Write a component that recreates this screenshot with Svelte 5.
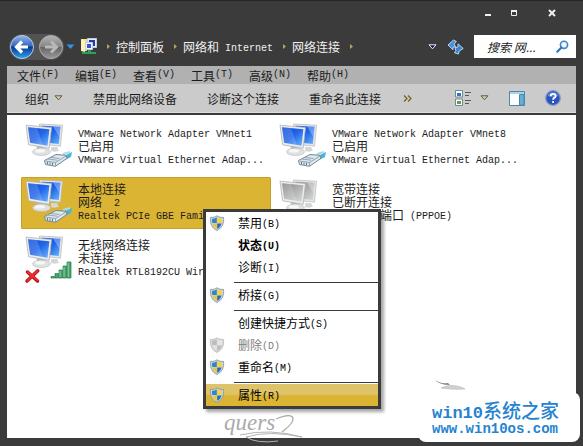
<script>
  const crumbs = ['控制面板', '网络和 Internet', '网络连接'];
  const menus = ['文件(F)', '编辑(E)', '查看(V)', '工具(T)', '高级(N)', '帮助(H)'];
  const tools = ['禁用此网络设备', '诊断这个连接', '重命名此连接'];
  const connections = [
    { lines: ['VMware Network Adapter VMnet1', '已启用', 'VMware Virtual Ethernet Adap...'], kind: 'lan' },
    { lines: ['VMware Network Adapter VMnet8', '已启用', 'VMware Virtual Ethernet Adap...'], kind: 'lan' },
    { lines: ['本地连接', '网络  2', 'Realtek PCIe GBE Family Contr...'], kind: 'lan', selected: true },
    { lines: ['宽带连接', '已断开连接', 'WAN 微型端口 (PPPOE)'], kind: 'off' },
    { lines: ['无线网络连接', '未连接', 'Realtek RTL8192CU Wireless...'], kind: 'wifi' }
  ];
  const actions = [
    { label: '禁用(B)', shield: true },
    { label: '状态(U)', bold: true },
    { label: '诊断(I)' },
    null,
    { label: '桥接(G)', shield: true },
    null,
    { label: '创建快捷方式(S)' },
    { label: '删除(D)', shield: true, disabled: true },
    { label: '重命名(M)', shield: true },
    null,
    { label: '属性(R)', shield: true, active: true }
  ];
  const split = (s) => s.match(/[\x00-\x7f]+|[^\x00-\x7f]+/g) ?? [];
</script>

{#snippet mixed(s)}{#each split(s) as part}{#if part.charCodeAt(0) < 128}<span class="latin">{part}</span>{:else}{part}{/if}{/each}{/snippet}

{#snippet shieldIcon(off)}
  <svg class="shield" width="16" height="16" viewBox="0 0 16 16" aria-hidden="true">
    <path d="M8 .8C6 2.2 4 2.6 1.4 2.4 1 8.6 2.6 12.8 8 15.4c5.400-2.600 7-6.800 6.600-13C12 2.600 10 2.200 8 .8z" fill={off ? '#d8d8d8' : '#c9d3da'} stroke={off ? '#b8b8b8' : '#7f919d'} stroke-width=".8" />
    <path d="M7.800 2.600C6.300 3.500 4.700 3.900 3 3.900c-.1 1.500 0 2.900.4 4.100h4.400z" fill={off ? '#bdbdbd' : '#2f83cf'} />
    <path d="M8.200 2.600c1.500.9 3.100 1.300 4.800 1.300.1 1.500 0 2.900-.4 4.100H8.200z" fill={off ? '#e6e6e6' : '#f8d43a'} />
    <path d="M3.500 8.400h4.300v5.400c-2.200-1.200-3.600-3-4.300-5.400z" fill={off ? '#e2e2e2' : '#f5c528'} />
    <path d="M12.500 8.400H8.200v5.400c2.200-1.200 3.600-3 4.300-5.400z" fill={off ? '#bdbdbd' : '#2570bd'} />
  </svg>
{/snippet}

{#snippet computerIcon(kind)}
  {@const screen = kind === 'off' ? 'url(#screenOff)' : 'url(#screenOn)'}
  <svg class="computer" width="48" height="48" viewBox="0 0 48 48" aria-hidden="true">
    <path d="M14.500 3l23 1.200-2 21-20-2z" fill="#e4e5e6" stroke="#b4b8bb" stroke-width=".7" />
    <path d="M16.500 4.800l19 1-1.700 17.300-16-1.800z" fill={screen} />
    <path d="M28 5.500l7.500.3-1.200 10z" fill="#fff" opacity=".3" />
    <path d="M26 26h6l2 3.500q-3 2-8 .5z" fill="#d4d7d9" />
    <path d="M11.500 24.500h7l.8 5h-7z" fill="#b5babd" />
    <ellipse cx="16.500" cy="30.800" rx="9" ry="3.700" fill="#dfe1e2" stroke="#b7bbbd" stroke-width=".6" />
    <ellipse cx="15" cy="29.800" rx="5" ry="1.800" fill="#f7f7f7" />
    <path d="M1 4.200l25.500 2.300-2.300 20.800L3.600 23.800z" fill="#ebecec" stroke="#aeb4b8" stroke-width=".8" />
    <path d="M3 6.300l21.400 2-1.900 16.400-17.300-2.900z" fill={screen} />
    <path d="M3 6.300l9 .8 6 17-12.800-2.300z" fill="#fff" opacity=".17" />
    {#if kind === 'lan'}
      <path d="M39 35l8-4-1 5-6 3z" fill="#48b4d8" />
      <path d="M38 33l7-2" stroke="#a7dcec" stroke-width="2" />
      <path d="M19.500 39.500L31 33.500l10 .8 1 3-11.500 8-10-1.800z" fill="#dce7ee" stroke="#728796" stroke-width="1" />
      <path d="M20.500 40l10 1.500L41 35M30.500 41.500v3.400M23 38l9 1.200M26 36.500l8.500 1" fill="none" stroke="#8196a4" stroke-width=".8" />
      <path d="M22.500 41v2.200M25 41.500v2.200M27.500 41.800V44" stroke="#586e7d" stroke-width=".9" />
    {:else if kind === 'wifi'}
      <path d="M26 43.500h3.500V45H26zM30 40.500h3.500V45H30zM34 37h3.500v8H34zM38 33h3.500v12H38zM42 29h4v16h-4z" fill="#48a36c" stroke="#297d4a" stroke-width=".7" />
      <path d="M39 34v10M43.200 30v14M35 38v6" stroke="#9bd9b1" stroke-width=".9" />
      <path d="M2.500 39l10 9M12.800 37.800L2 48" stroke="#a80d14" stroke-width="3.400" stroke-linecap="round" />
      <path d="M2.800 39l9.500 8.300M12.500 38L2.500 47.500" stroke="#f02c32" stroke-width="2" stroke-linecap="round" />
    {/if}
  </svg>
{/snippet}

{#snippet caret(fill, stroke)}
  <svg width="9" height="6" viewBox="0 0 9 6" aria-hidden="true"><path d="M1 .8h7L4.500 4.800z" {fill} {stroke} /></svg>
{/snippet}

<svg class="defs" width="0" height="0" aria-hidden="true">
  <defs>
    <linearGradient id="screenOn" x1="0" y1="0" x2="1" y2="1">
      <stop offset="0" stop-color="#0c4bd6" /><stop offset=".5" stop-color="#2065ea" /><stop offset="1" stop-color="#6fb8fa" />
    </linearGradient>
    <linearGradient id="screenOff" x1="0" y1="0" x2="1" y2="1">
      <stop offset="0" stop-color="#858585" /><stop offset="1" stop-color="#dadada" />
    </linearGradient>
    <linearGradient id="blueBall" x1="0" y1="0" x2="0" y2="1">
      <stop offset="0" stop-color="#8fb6ea" /><stop offset=".45" stop-color="#3568c2" /><stop offset=".5" stop-color="#0c3591" /><stop offset="1" stop-color="#2aa5f5" />
    </linearGradient>
    <linearGradient id="greyBall" x1="0" y1="0" x2="0" y2="1">
      <stop offset="0" stop-color="#b5b5b5" /><stop offset=".48" stop-color="#868686" /><stop offset=".52" stop-color="#666" /><stop offset="1" stop-color="#999" />
    </linearGradient>
  </defs>
</svg>

<div class="window">
  <header class="titlebar">
    <button aria-label="最小化"><svg width="8" height="8"><path d="M1 6h6" stroke="#eee" stroke-width="2" /></svg></button>
    <button aria-label="最大化"><svg width="8" height="8"><path d="M1.500 2v4.500h5V2" fill="none" stroke="#eee" /><path d="M1 2h6" stroke="#eee" stroke-width="2" /></svg></button>
    <button class="close" aria-label="关闭"><svg width="8" height="8"><path d="M1 1l6 6M7 1L1 7" stroke="#eee" stroke-width="2" /></svg></button>
  </header>

  <nav class="address">
    <div class="history">
      <button aria-label="后退">
        <svg width="26" height="26" viewBox="0 0 26 26"><circle cx="13" cy="13" r="11.500" fill="url(#blueBall)" stroke="#b8cbe4" /><path d="M19 13H8M13 7.500L7.500 13l5.500 5.500" fill="none" stroke="#fff" stroke-width="3.200" /></svg>
      </button>
      <button aria-label="前进">
        <svg width="26" height="26" viewBox="0 0 26 26"><circle cx="13" cy="13" r="11.500" fill="url(#greyBall)" stroke="#aaa" /><path d="M7 13h11M13 7.500l5.500 5.500-5.500 5.500" fill="none" stroke="#b9b9b9" stroke-width="3" /></svg>
      </button>
    </div>
    <button class="recent" aria-label="最近页面">{@render caret('#3d9be8', '#2876b8')}</button>
    <svg width="16" height="17" viewBox="0 0 16 17" aria-hidden="true">
      <path d="M0 1h6v12H0z" fill="#f5e08a" /><path d="M0 1l4 2v11l-4-1z" fill="#fff3b8" />
      <path d="M6.500.5h9v9h-9z" fill="#e8ecf4" stroke="#c2cbe0" /><path d="M8 2h6v6H8z" fill="#2239b0" />
      <path d="M4.500 4.500h7v7h-7z" fill="#f4f6fa" stroke="#c2cbe0" /><path d="M6 6h4v4H6z" fill="#3a54cf" />
      <path d="M7 12h3v2h5v2H1v-2h6z" fill="#25a35c" />
    </svg>
    {#each crumbs as crumb}
      <svg class="sep" width="3" height="5" aria-hidden="true"><path d="M0 0l3 2.500L0 5z" fill="#b4a65c" /></svg>
      <a href="#top">{@render mixed(crumb)}</a>
    {/each}
    <svg class="sep" width="3" height="5" aria-hidden="true"><path d="M0 0l3 2.500L0 5z" fill="#b4a65c" /></svg>
    <span class="spring"></span>
    <button class="drop" aria-label="以前的位置">{@render caret('#101065', '#eee')}</button>
    <button class="refresh" aria-label="刷新">
      <svg width="17" height="16" viewBox="0 0 17 16"><path d="M6.500 1L1 6l5 4.800V8h2.500L7.200 4.800 9.500 2.600z" fill="#4a90d8" stroke="#b5d5f0" /><path d="M11 4.800l5.200 4.700-4 2.500-.7 3-4-1.200 1.300-2.300L8 8.500l3-.5z" fill="#3d82cc" stroke="#b5d5f0" /></svg>
    </button>
    <label class="search">
      <input type="text" aria-label="搜索 网络连接" placeholder="搜索 网..." />
      <svg width="13" height="13" viewBox="0 0 13 13" aria-hidden="true"><circle cx="8" cy="4.800" r="3.600" fill="#eef7ff" stroke="#3c86c8" stroke-width="1.600" /><path d="M5.400 7.500L1.300 11.700" stroke="#3477b8" stroke-width="2.200" stroke-linecap="round" /></svg>
    </label>
  </nav>

  <div class="menubar">
    {#each menus as m}<button>{@render mixed(m)}</button>{/each}
  </div>

  <div class="toolbar">
    <button class="organize"><span>组织</span>{@render caret('#d8cfa0', '#5f5b43')}</button>
    {#each tools as t}<button>{t}</button>{/each}
    <button class="more" aria-label="更多">
      <svg width="9" height="7" viewBox="0 0 9 7"><path d="M1 .5l3 3-3 3M5 .5l3 3-3 3" fill="none" stroke="#7a6420" stroke-width="1.300" /></svg>
    </button>
    <div class="right">
      <button class="view" aria-label="更改视图">
        <svg width="16" height="16" viewBox="0 0 16 16"><path d="M.5.500h7v6.500h-7zM.5 9h7v6.500h-7z" fill="#fff" stroke="#6f8796" /><path d="M2 3h4v3H2z" fill="#3770bc" /><path d="M2 11h4v3H2z" fill="#6b9a51" /><path d="M10 2.500h6M10 5.500h4M10 10.500h6M10 13.500h4" stroke="#595959" /></svg>
        {@render caret('#d8cfa0', '#5f5b43')}
      </button>
      <button aria-label="预览窗格">
        <svg width="16" height="15" viewBox="0 0 16 15"><path d="M.5.500h15v14H.5z" fill="#fff" stroke="#4b88ad" /><path d="M1 1h14v2H1z" fill="#a9d3e8" /><path d="M10.500 3.500h4.500V14h-4.500z" fill="#63b2d6" stroke="#4b88ad" /></svg>
      </button>
      <button aria-label="帮助">
        <svg width="16" height="16" viewBox="0 0 16 16"><circle cx="8" cy="8" r="7.300" fill="#2953bd" stroke="#8297c5" stroke-width="1.300" /><path d="M2.500 6a5.700 5 0 0 1 11 0q-5 2-11 0z" fill="#7fa2ea" opacity=".6" /><path d="M5.600 6.200q0-2.400 2.500-2.400t2.500 2.100q0 1.300-1.400 2Q8.100 8.500 8.100 9.700M8.100 11v1.900" fill="none" stroke="#fff" stroke-width="1.800" /></svg>
      </button>
    </div>
  </div>

  <main>
    <div class="grid">
      {#each connections as c}
        <button class="conn" class:selected={c.selected}>
          {@render computerIcon(c.kind)}
          <span class="lines">{#each c.lines as l}<span>{@render mixed(l)}</span>{/each}</span>
        </button>
      {/each}
    </div>
  </main>

  <div class="context" role="menu">
    {#each actions as a}
      {#if a}
        <button role="menuitem" class:bold={a.bold} class:active={a.active} disabled={a.disabled}>
          <span class="slot">{#if a.shield}{@render shieldIcon(a.disabled)}{/if}</span>
          <span>{@render mixed(a.label)}</span>
        </button>
      {:else}
        <div class="rule" role="separator"></div>
      {/if}
    {/each}
  </div>

  <div class="signature">
    <span>quers</span>
    <svg width="90" height="34" viewBox="0 0 90 34" aria-hidden="true"><path d="M52 6q15-6 17-1 1 5-11 14" fill="none" stroke="#aaa" stroke-width="1.300" /><path d="M16 22q30-7 62 2Q45 17 22 24q11 7 32 4" fill="none" stroke="#b4b4b4" stroke-width="1" /></svg>
  </div>

  <div class="brand">
    <svg width="32" height="12" viewBox="0 0 32 12" aria-hidden="true"><path d="M0 0q5 5 14 4l2 2Q5 6 0 0z" fill="#888" /><path d="M7 9q8-4 16-2 5 1 8 3-12 1-24-1z" fill="#d2d2d2" stroke="#aaa" stroke-width=".5" /></svg>
    <strong><span>win10</span>系统之家</strong>
    <em>www.win10os.com</em>
  </div>
</div>

<style>
  :global(body) { margin: 0; background: #3b3b3b; }
  .window, .window * { box-sizing: border-box; }
  .window {
    position: relative;
    display: flex;
    flex-direction: column;
    min-height: 100vh;
    padding: 0 7px 8px;
    border-top: 1px solid #262626;
    overflow: hidden;
    background: #3b3b3b;
    color: #1c1c1c;
    font: 12px/13px "Noto Sans CJK SC", sans-serif;
  }
  .defs { position: absolute; }
  svg { display: block; flex: none; }
  button, input { font: inherit; color: inherit; }
  button { display: flex; align-items: center; margin: 0; padding: 0; border: 0; background: none; white-space: pre; text-align: left; }
  .latin { font-family: "Liberation Mono", monospace; font-size: 10px; line-height: 10px; vertical-align: 1px; }
  .spring { flex: 1; }

  .titlebar { display: flex; justify-content: flex-end; align-items: center; gap: 18px; height: 28px; padding: 0 20px 4px 0; }
  .titlebar .close { margin-left: 12px; }

  .address { display: flex; align-items: center; height: 37px; padding-bottom: 2px; color: #f0f0f0; }
  .history { display: flex; gap: 3px; margin-left: 2px; border-radius: 14px; background: #535353; }
  .recent { margin: 0 6px 0 2px; }
  .sep { margin: 0 6px 0 10px; }
  .address a { color: inherit; text-decoration: none; white-space: pre; }
  .drop { margin-right: 10px; }
  .refresh { margin-right: 10px; }
  .search { display: flex; align-items: center; width: 102px; height: 23px; padding: 0 7px 0 13px; background: #fff; color: #222; }
  .search input { flex: 1; min-width: 0; padding: 0; border: 0; outline: 0; background: none; font-style: italic; }
  .search input::placeholder { color: #222; opacity: 1; }

  .menubar { display: flex; height: 18px; padding-left: 10px; background: #b1b1b1; }
  .menubar button { min-width: 58px; }

  .toolbar { display: flex; align-items: center; gap: 30px; height: 29px; padding: 0 15px 0 18px; background: #cbcbcb; border-bottom: 1px solid #dfdfdf; }
  .organize { gap: 5px; }
  .more { margin-left: -8px; }
  .right { display: flex; align-items: center; gap: 20px; margin-left: auto; }
  .view { gap: 9px; }

  main { flex: 1; margin-top: 2px; padding: 6px 14px; background: #fff; }
  .grid { display: grid; grid-template-columns: repeat(auto-fill, 250px); gap: 4px; }
  .conn { gap: 5px; height: 52px; padding-left: 4px; border-radius: 2px; overflow: hidden; }
  .conn.selected { background: #dcb433; box-shadow: inset 0 0 0 1px #c6a02a; }
  .computer { align-self: flex-start; overflow: visible; }
  .lines { display: flex; flex-direction: column; min-width: 0; padding-bottom: 3px; }
  .lines > span { height: 13px; line-height: 13px; }

  .context {
    position: absolute;
    left: 203px;
    top: 208px;
    width: 178px;
    border: 3px solid #3b3b3b;
    background: #fff;
    color: #000;
    box-shadow: 3px 3px 3px rgba(0, 0, 0, .35);
  }
  .context button { width: 100%; height: 22px; padding-left: 3px; }
  .context button:disabled { color: #808080; }
  .context .bold, .context .bold .latin { font-weight: bold; }
  .context .active { background: linear-gradient(#dfc368 0 45%, #dcb433 55%); }
  .slot { width: 29px; }
  .rule { height: 2px; margin: 4px 0 0 28px; padding-bottom: 1px; border-top: 1px solid #3b3b3b; }

  .signature { position: absolute; left: 224px; bottom: -1px; width: 90px; height: 34px; color: #aaa; font: italic 23px/20px "Liberation Serif", serif; }
  .signature svg { position: absolute; inset: 0; }

  .brand {
    position: absolute;
    right: 3px;
    bottom: 4px;
    width: 162px;
    height: 50px;
    padding: 8px 0 0 14px;
    border-radius: 8px;
    background: #fff;
    color: #2583cf;
    white-space: nowrap;
  }
  .brand svg { position: absolute; left: 16px; top: -13px; }
  .brand strong { display: block; height: 20px; font-size: 19px; line-height: 20px; font-weight: 500; }
  .brand span { font-family: "Liberation Mono", monospace; font-weight: bold; font-size: 17px; line-height: 17px; }
  .brand em { display: block; font: bold 14px/18px "Liberation Mono", monospace; }
</style>
